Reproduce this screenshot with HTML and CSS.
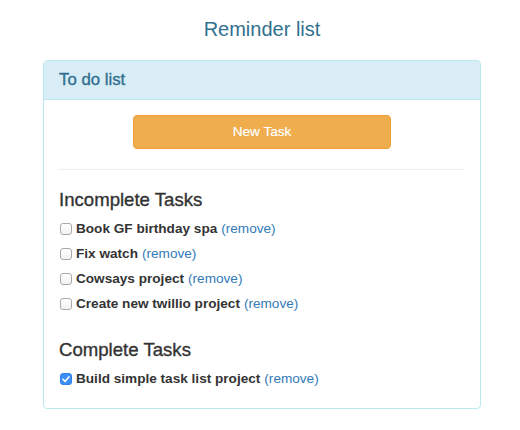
FILE: index.html
```html
<!DOCTYPE html>
<html lang="en">
<head>
<meta charset="utf-8">
<title>Reminder list</title>
<link rel="stylesheet" href="styles.css">
</head>
<body>
<div class="container">
  <h1 class="page-title">Reminder list</h1>
  <div class="panel">
    <div class="panel-heading">
      <h2 class="panel-title">To do list</h2>
    </div>
    <div class="panel-body">
      <button class="btn-warning" type="button">New Task</button>
      <hr class="divider">
      <section class="section">
        <h3 class="section-title">Incomplete Tasks</h3>
        <ul class="task-list">
          <li class="task"><span class="box"></span><span class="task-name">Book GF birthday spa</span><a class="remove" href="#">(remove)</a></li>
          <li class="task"><span class="box"></span><span class="task-name">Fix watch</span><a class="remove" href="#">(remove)</a></li>
          <li class="task"><span class="box"></span><span class="task-name">Cowsays project</span><a class="remove" href="#">(remove)</a></li>
          <li class="task"><span class="box"></span><span class="task-name">Create new twillio project</span><a class="remove" href="#">(remove)</a></li>
        </ul>
      </section>
      <section class="section section-complete">
        <h3 class="section-title">Complete Tasks</h3>
        <ul class="task-list">
          <li class="task"><span class="box box-checked"><svg viewBox="0 0 12 12" width="12" height="12"><path d="M3 6.3 L5.1 8.4 L9 3.8" fill="none" stroke="#fff" stroke-width="1.6" stroke-linecap="round" stroke-linejoin="round"/></svg></span><span class="task-name">Build simple task list project</span><a class="remove" href="#">(remove)</a></li>
        </ul>
      </section>
    </div>
  </div>
</div>
</body>
</html>
```

FILE: styles.css
```css
* { box-sizing: border-box; }

body {
  margin: 0;
  padding: 0 0 0 4px;
  background: #fff;
  font-family: "Liberation Sans", Helvetica, Arial, sans-serif;
  font-size: 13.6px;
  line-height: 20px;
  color: #333;
}

.container {
  width: 438px;
  margin: 0 auto;
}

.page-title {
  margin: 18px 0 20px;
  font-size: 20px;
  line-height: 22px;
  font-weight: 500;
  color: #31708f;
  text-align: center;
}

.panel {
  border: 1px solid #bce8f1;
  border-radius: 4px;
  background: #fff;
}

.panel-heading {
  background: #d9edf7;
  color: #31708f;
  padding: 10px 15px;
  border-bottom: 1px solid #bce8f1;
  border-radius: 3px 3px 0 0;
}

.panel-title {
  margin: 0;
  font-size: 16.8px;
  line-height: 17.6px;
  font-weight: 500;
  -webkit-text-stroke: 0.35px #31708f;
}

.panel-body {
  padding: 15px 15px 19px;
}

.btn-warning {
  display: block;
  width: 258px;
  height: 34px;
  margin: 0 auto;
  padding: 6px 12px;
  background: #f0ad4e;
  border: 1px solid #eea236;
  border-radius: 4px;
  color: #fff;
  font-family: inherit;
  font-size: 13.6px;
  line-height: 20px;
  -webkit-text-stroke: 0.2px #fff;
}

.divider {
  margin: 20px 0;
  border: 0;
  border-top: 1px solid #eee;
  height: 0;
}

.section-title {
  margin: 0 0 9px;
  font-size: 18.6px;
  line-height: 1.1;
  font-weight: 500;
  color: #333;
  -webkit-text-stroke: 0.35px #333;
}

.section-complete {
  margin-top: 26px;
}

.section-complete .section-title {
  margin-bottom: 8px;
}

.task-list {
  list-style: none;
  margin: 0;
  padding: 0;
  display: flex;
  flex-direction: column;
  gap: 5px;
}

.task {
  display: flex;
  align-items: center;
  height: 20px;
  padding-left: 1px;
  white-space: nowrap;
}

.box {
  flex: none;
  width: 12px;
  height: 12px;
  margin-right: 4px;
  border: 1px solid #a9a9a9;
  border-radius: 3px;
  background: linear-gradient(#ffffff, #f1f1f1);
  display: flex;
  align-items: center;
  justify-content: center;
}

.box-checked {
  background: #3b8ff6;
  border-color: #3282e6;
}

.box-checked svg {
  display: block;
  flex: none;
}

.task-name {
  font-weight: bold;
  color: #333;
}

.remove {
  margin-left: 4px;
  color: #337ab7;
  text-decoration: none;
}
```
